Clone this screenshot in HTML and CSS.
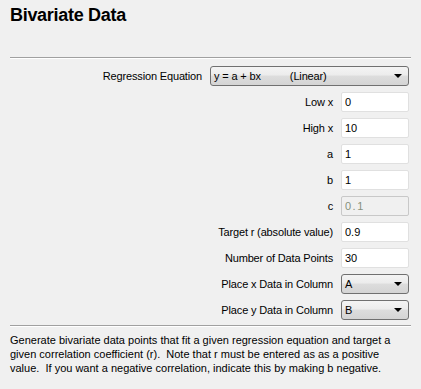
FILE: index.html
```html
<!DOCTYPE html>
<html lang="en">
<head>
    <meta charset="UTF-8">
    <title>Bivariate Data</title>
    <link rel="stylesheet" href="styles.css">
</head>
<body>
    <div class="panel">
        <h1>Bivariate Data</h1>
        <div class="sep top-sep"></div>

        <div class="form">
            <div class="row">
                <label>Regression Equation</label>
                <div class="select wide"><span>y = a + bx&nbsp;&nbsp;&nbsp;&nbsp;&nbsp;&nbsp;&nbsp;&nbsp;&nbsp;&nbsp;(Linear)</span><i class="arrow"></i></div>
            </div>
            <div class="row">
                <label>Low x</label>
                <input type="text" value="0">
            </div>
            <div class="row">
                <label>High x</label>
                <input type="text" value="10">
            </div>
            <div class="row">
                <label>a</label>
                <input type="text" value="1">
            </div>
            <div class="row">
                <label>b</label>
                <input type="text" value="1">
            </div>
            <div class="row">
                <label>c</label>
                <input type="text" value="0.1" class="disabled" disabled>
            </div>
            <div class="row">
                <label>Target r (absolute value)</label>
                <input type="text" value="0.9">
            </div>
            <div class="row">
                <label>Number of Data Points</label>
                <input type="text" value="30">
            </div>
            <div class="row">
                <label>Place x Data in Column</label>
                <div class="select"><span>A</span><i class="arrow"></i></div>
            </div>
            <div class="row">
                <label>Place y Data in Column</label>
                <div class="select"><span>B</span><i class="arrow"></i></div>
            </div>
        </div>

        <div class="sep bottom-sep"></div>
        <p class="note">
            Generate bivariate data points that fit a given regression equation and target a<br>
            given correlation coefficient (r).&nbsp; Note that r must be entered as as a positive<br>
            value.&nbsp; If you want a negative correlation, indicate this by making b negative.
        </p>
    </div>
</body>
</html>
```

FILE: styles.css
```css
body {
    margin: 0;
    padding: 0;
    background: #f0f0f0;
    font-family: 'Liberation Sans', Arial, sans-serif;
    font-size: 11px;
    color: #000;
}

.panel {
    width: 421px;
    padding: 0 10px;
    box-sizing: border-box;
}

h1 {
    margin: 0;
    padding-top: 5px;
    font-size: 18px;
    line-height: 21px;
    font-weight: bold;
    letter-spacing: -0.3px;
}

.sep {
    border-top: 1px solid #a0a0a0;
    border-bottom: 1px solid #ffffff;
}

.top-sep {
    margin-top: 31px;
}

.form {
    padding-top: 7px;
    padding-right: 2px;
}

.row {
    display: flex;
    justify-content: flex-end;
    align-items: center;
    gap: 8px;
    height: 20px;
    margin-bottom: 6px;
}

.row:last-child {
    margin-bottom: 5px;
}

label {
    white-space: nowrap;
    letter-spacing: -0.15px;
}

input {
    width: 68px;
    height: 20px;
    box-sizing: border-box;
    margin: 0;
    padding: 0 3px;
    border: 1px solid #e0e0e0;
    border-radius: 2px;
    background: #fff;
    font-family: 'Liberation Sans', Arial, sans-serif;
    font-size: 11px;
    color: #000;
}

input:focus {
    outline: none;
}

input.disabled {
    background: #f0f0f0;
    border-color: #c8c8c8;
    color: #86907c;
    letter-spacing: 1.5px;
}

.select {
    position: relative;
    width: 68px;
    height: 20px;
    box-sizing: border-box;
    padding: 0 3px;
    border: 1px solid #707070;
    border-radius: 3px;
    background: linear-gradient(#f4f4f4, #ececec 45%, #dddddd 50%, #d4d4d4);
    display: flex;
    align-items: center;
    white-space: nowrap;
    letter-spacing: -0.15px;
}

.select.wide {
    width: 199px;
}

.arrow {
    position: absolute;
    right: 6px;
    top: 7px;
    width: 0;
    height: 0;
    border-left: 4px solid transparent;
    border-right: 4px solid transparent;
    border-top: 4px solid #000;
}

.note {
    margin: 0;
    padding-top: 6px;
    line-height: 14px;
    white-space: nowrap;
}
```
